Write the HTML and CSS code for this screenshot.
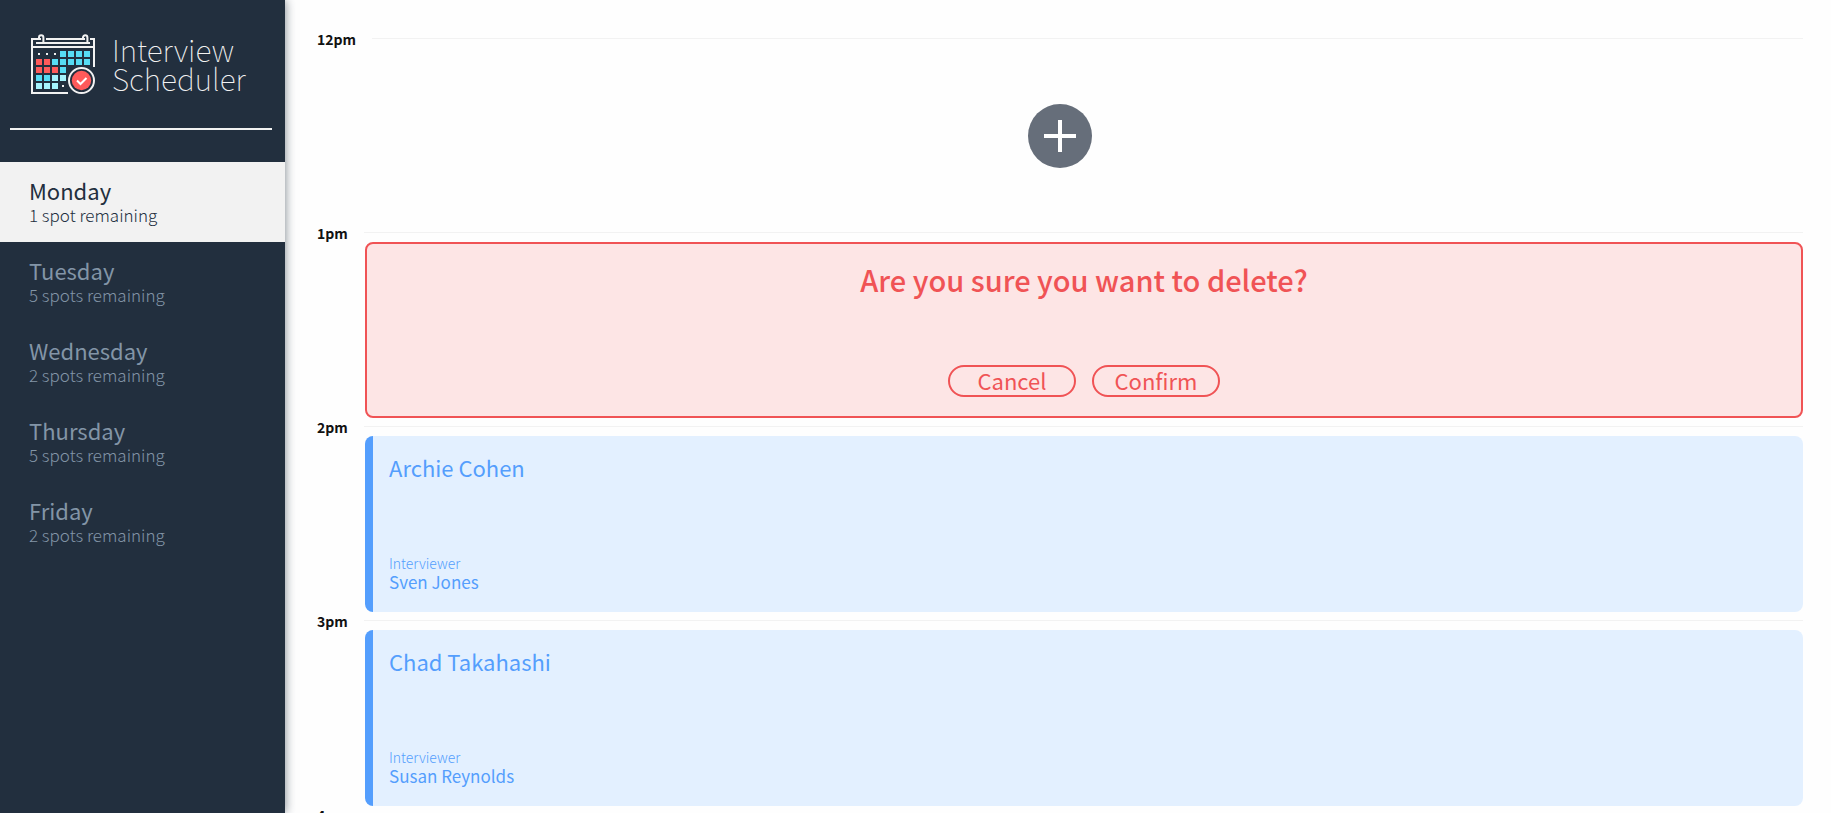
FILE: index.html
```html
<!DOCTYPE html>
<html lang="en">
<head>
<meta charset="utf-8">
<title>Interview Scheduler</title>
<link rel="stylesheet" href="styles.css">
</head>
<body>
<div class="layout">
  <aside class="sidebar">
    <div class="brand">
      <svg class="brand-icon" viewBox="0 0 64 60" width="64" height="60" aria-hidden="true">
        <g fill="none" stroke="#f2f2f2" stroke-width="2">
          <path d="M10 5H1v54h36M15 5h39M59 5h4v28M1 13h62M5 9h54"/>
          <path d="M8 5V3.500a2.200 2.200 0 0 1 4.400 0V9M52 5V3.500a2.200 2.200 0 0 1 4.400 0V9"/>
        </g>
        <path fill="#f2f2f2" d="M7 19h2v2H7zM15 19h2v2h-2zM23 19h2v2h-2zM31 51h2v2h-2z"/>
        <path fill="#56dcf4" d="M29 17h6v6h-6zM37 17h6v6h-6zM45 17h6v6h-6zM53 17h6v6h-6zM21 25h6v6h-6zM29 25h6v6h-6zM37 25h6v6h-6zM45 25h6v6h-6zM53 25h6v6h-6zM29 33h6v6h-6zM5 41h6v6H5zM13 41h6v6h-6z"/>
        <path fill="#ff5a5a" d="M5 25h6v6H5zM13 25h6v6h-6zM5 33h6v6H5zM13 33h6v6h-6zM21 33h6v6h-6z"/>
        <path fill="#a6f3fd" d="M21 41h6v6h-6zM29 41h6v6h-6zM5 49h6v6H5zM13 49h6v6h-6zM21 49h6v6h-6z"/>
        <circle cx="50.500" cy="46.500" r="12.500" fill="#222f3e" stroke="#f2f2f2" stroke-width="2"/>
        <circle cx="50.500" cy="46.500" r="9.700" fill="#ff5a5a"/>
        <path d="M46 46.500l3.500 3.500 6-6" fill="none" stroke="#fff" stroke-width="2"/>
      </svg>
      <div class="brand-name">Interview<br>Scheduler</div>
    </div>
    <hr class="separator">
    <nav class="days">
      <button class="day day-selected" type="button"><span class="day-name">Monday</span><span class="day-spots">1 spot remaining</span></button>
      <button class="day" type="button"><span class="day-name">Tuesday</span><span class="day-spots">5 spots remaining</span></button>
      <button class="day" type="button"><span class="day-name">Wednesday</span><span class="day-spots">2 spots remaining</span></button>
      <button class="day" type="button"><span class="day-name">Thursday</span><span class="day-spots">5 spots remaining</span></button>
      <button class="day" type="button"><span class="day-name">Friday</span><span class="day-spots">2 spots remaining</span></button>
    </nav>
  </aside>
  <main class="schedule">
    <article class="appointment">
      <header class="time"><h4 class="time-label">12pm</h4><hr class="time-line"></header>
      <div class="empty">
        <button class="add" type="button" aria-label="Add appointment">
          <svg viewBox="0 0 64 64" width="64" height="64" aria-hidden="true"><circle cx="32" cy="32" r="32" fill="#666e7a"/><path d="M32 16v32M16 32h32" stroke="#fff" stroke-width="4"/></svg>
        </button>
      </div>
    </article>
    <article class="appointment">
      <header class="time"><h4 class="time-label">1pm</h4><hr class="time-line"></header>
      <section class="card confirm">
        <h1 class="confirm-title">Are you sure you want to delete?</h1>
        <div class="confirm-actions">
          <button class="button" type="button">Cancel</button>
          <button class="button" type="button">Confirm</button>
        </div>
      </section>
    </article>
    <article class="appointment">
      <header class="time"><h4 class="time-label">2pm</h4><hr class="time-line"></header>
      <section class="card booked">
        <h2 class="student">Archie Cohen</h2>
        <div><h4 class="role">Interviewer</h4><h3 class="interviewer">Sven Jones</h3></div>
      </section>
    </article>
    <article class="appointment">
      <header class="time"><h4 class="time-label">3pm</h4><hr class="time-line"></header>
      <section class="card booked">
        <h2 class="student">Chad Takahashi</h2>
        <div><h4 class="role">Interviewer</h4><h3 class="interviewer">Susan Reynolds</h3></div>
      </section>
    </article>
    <article class="appointment">
      <header class="time"><h4 class="time-label">4pm</h4><hr class="time-line"></header>
    </article>
  </main>
</div>
</body>
</html>
```
FILE: styles.css
```css
* { box-sizing: border-box; }
body, h1, h2, h3, h4, hr { margin: 0; }
body {
  font-family: "Noto Sans CJK JP", "Noto Sans CJK SC", sans-serif;
  color: #111;
  background: #fefefe;
}
button { font: inherit; cursor: pointer; }
.layout { display: flex; height: 100vh; }
.sidebar {
  flex: none;
  width: 285px;
  background: #222f3e;
  box-shadow: 0 0 10px rgba(34, 47, 62, 0.6);
}
.brand {
  display: flex;
  align-items: center;
  gap: 17px;
  height: 128px;
  padding-left: 31px;
}
.brand-icon { flex: none; }
.brand-name {
  color: #f2f2f2;
  font-size: 30px;
  font-weight: 100;
  line-height: 29px;
}
.separator {
  height: 2px;
  margin: 0 13px 32px 10px;
  border: 0;
  background: #f2f2f2;
}
.days { display: flex; flex-direction: column; }
.day {
  display: flex;
  flex-direction: column;
  justify-content: center;
  height: 80px;
  padding: 0 29px 2px;
  border: 0;
  background: transparent;
  color: #8395a7;
  text-align: left;
}
.day-selected { background: #f2f2f2; color: #222f3e; }
.day-name { font-size: 22px; line-height: 28px; }
.day-spots { font-size: 17px; line-height: 22px; font-weight: 300; }
.schedule {
  flex: 1;
  min-width: 0;
  padding: 30px 28px 0 32px;
  overflow-y: auto;
  scrollbar-width: none;
}
.time { display: flex; align-items: center; gap: 16px; height: 18px; }
.time-label { font-size: 14px; line-height: 18px; font-weight: 700; }
.time-line { flex: 1; height: 1px; margin-bottom: 2px; border: 0; background: #f2f2f2; }
.empty { display: flex; align-items: center; justify-content: center; height: 176px; }
.add { padding: 0; border: 0; border-radius: 50%; background: none; }
.add svg { display: block; }
.card {
  display: flex;
  flex-direction: column;
  justify-content: space-between;
  height: 176px;
  margin-left: 48px;
  border-radius: 8px;
}
.confirm {
  align-items: center;
  padding: 15px 16px 19px;
  border: 2px solid #f05355;
  background: #fde5e5;
  color: #f05355;
}
.confirm-title { font-size: 29px; line-height: 40px; font-weight: 500; }
.confirm-actions { display: flex; gap: 16px; }
.button {
  width: 128px;
  height: 32px;
  padding: 0 0 2px;
  border: 2px solid #f05355;
  border-radius: 16px;
  background: transparent;
  color: #f05355;
  font-size: 22px;
  line-height: 26px;
}
.booked {
  padding: 15px 16px 20px;
  border-left: 8px solid #549efd;
  background: #e3f0ff;
  color: #549efd;
}
.student { font-size: 22px; line-height: 32px; font-weight: 400; }
.role { font-size: 14px; line-height: 18px; font-weight: 300; }
.interviewer { font-size: 17px; line-height: 20px; font-weight: 400; }
```
